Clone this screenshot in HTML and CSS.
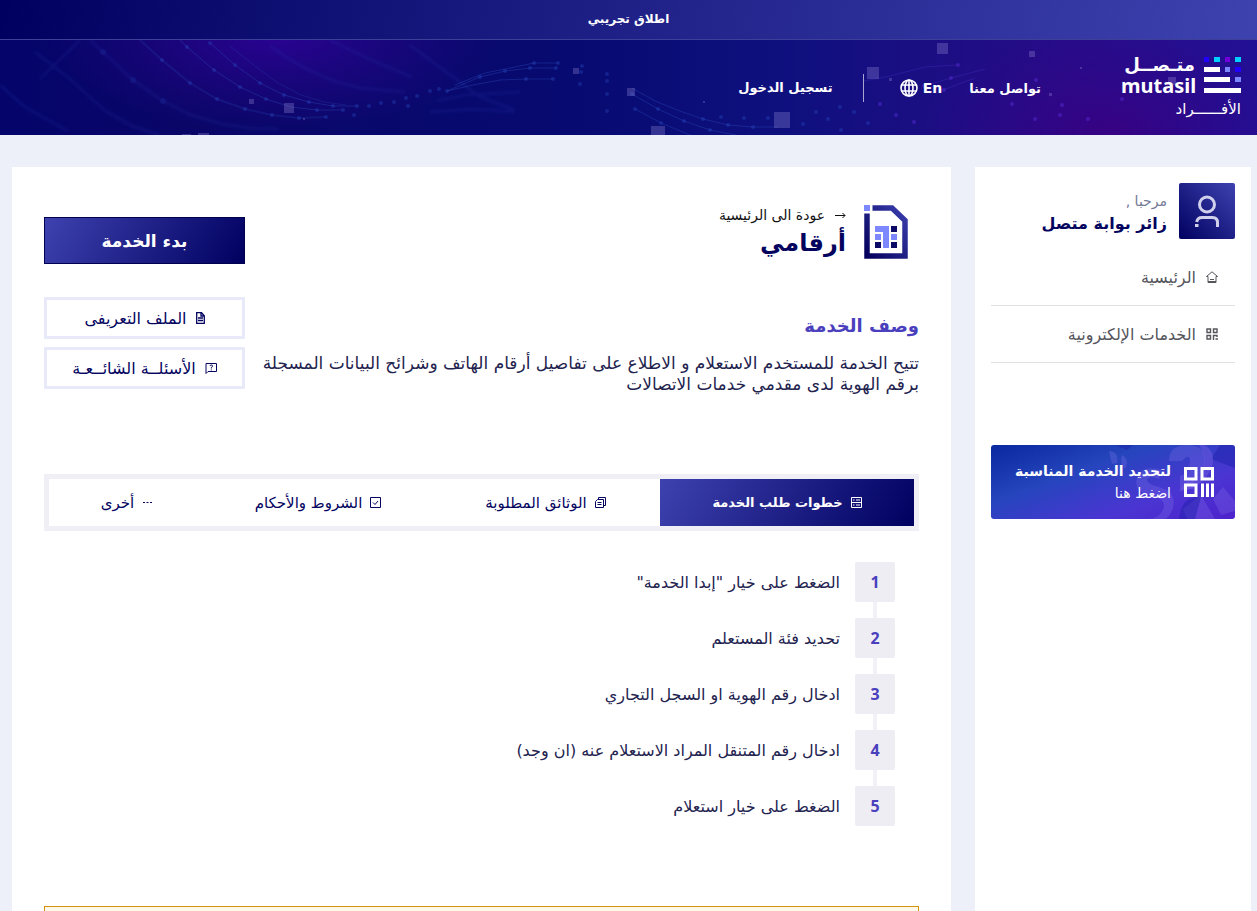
FILE: index.html
```html
<!DOCTYPE html>
<html lang="ar" dir="rtl">
<head>
<meta charset="utf-8">
<meta name="viewport" content="width=device-width, initial-scale=1">
<title>متصل - أرقامي</title>
<link rel="stylesheet" href="styles.css">
</head>
<body>
<div class="trial">اطلاق تجريبي</div>
<header class="header">
  <svg class="header-art" viewBox="0 0 1257 95" preserveAspectRatio="none" aria-hidden="true">
    <defs>
      <linearGradient id="hBase" x1="0" y1="0" x2="1" y2="0">
        <stop offset="0" stop-color="#04046a"/><stop offset=".15" stop-color="#0a0668"/><stop offset=".45" stop-color="#070a70"/><stop offset=".62" stop-color="#0e107e"/><stop offset=".85" stop-color="#270c88"/><stop offset="1" stop-color="#221094"/>
      </linearGradient>
      <radialGradient id="hGlow"><stop offset="0" stop-color="#30029a" stop-opacity=".85"/><stop offset="1" stop-color="#2a0588" stop-opacity="0"/></radialGradient>
      <radialGradient id="hGlow2"><stop offset="0" stop-color="#3a0082" stop-opacity=".85"/><stop offset="1" stop-color="#300588" stop-opacity="0"/></radialGradient>
      <filter id="soft"><feGaussianBlur stdDeviation="1.5"/></filter>
    </defs>
    <rect width="1257" height="95" fill="url(#hBase)"/>
    <ellipse cx="275" cy="-5" rx="230" ry="95" fill="url(#hGlow)"/>
    <ellipse cx="1110" cy="95" rx="190" ry="110" fill="url(#hGlow2)"/>
    <g fill="none" stroke="#2c4fc0" stroke-opacity=".36">
      <path d="M180 0 187 7 214 30 240 47 266 59 291 67 317 70 343 70"/>
      <path d="M210 3 235 25 260 43 284 55 309 62 333 66 357 66"/>
      <path d="M140 0 162 20 190 43 217 59 245 69 272 75 299 78 326 77" stroke-width="2" stroke-opacity=".2"/>
      <path d="M230 6 255 26 278 43 301 55 324 62 346 65" stroke-opacity=".25"/>
      <path d="M447 51 480 37 505 31 530 28 556 28M455 45 485 33 510 28 534 23 558 23M447 51 473 45 500 40 526 39 553 39"/>
      <path d="M632 54 658 69 684 81 710 90 736 95M632 48 655 61 680 71 703 79 728 85 753 87 778 87M635 69 661 83 690 95"/>
      <path d="M864 41 890 36 925 27 957 25M924 46 951 38 985 29M943 50 975 38" stroke="#4930c0"/>
    </g>
    <g fill="none" stroke="#2846bb" stroke-opacity=".16" stroke-width="3" filter="url(#soft)">
      <path d="M90 0 103 12 133 40 163 61 191 75 222 84 250 88 278 89M80 0 40 39M35 12 70 39 104 70 132 86 160 95M270 6 294 22 317 34 337 42 360 48 405 52M330 0 371 20 412 37M0 45 25 67 68 91M410 5 480 57 515 70M437 61 465 55 520 52M430 72 475 69 515 72"/>
    </g>
    <g fill="#2d59cf" fill-opacity=".3">
      <circle cx="187" cy="7" r="2"/><circle cx="214" cy="30" r="2"/><circle cx="240" cy="47" r="2"/><circle cx="266" cy="59" r="2"/><circle cx="317" cy="70" r="2"/><circle cx="343" cy="70" r="2"/><circle cx="210" cy="3" r="2"/><circle cx="235" cy="25" r="2"/><circle cx="260" cy="43" r="2"/><circle cx="284" cy="55" r="2"/><circle cx="309" cy="62" r="2"/><circle cx="333" cy="66" r="2"/><circle cx="357" cy="66" r="2"/><circle cx="162" cy="20" r="2"/><circle cx="190" cy="43" r="2"/><circle cx="217" cy="59" r="2"/><circle cx="245" cy="69" r="2"/><circle cx="272" cy="75" r="2"/><circle cx="299" cy="78" r="2"/><circle cx="326" cy="77" r="2"/>
      <circle cx="369" cy="66" r="2"/><circle cx="381" cy="63" r="2"/><circle cx="394" cy="62" r="2"/><circle cx="406" cy="58" r="2"/><circle cx="417" cy="56" r="2"/><circle cx="430" cy="51" r="2"/><circle cx="439" cy="49" r="2"/><circle cx="354" cy="75" r="2"/><circle cx="408" cy="66" r="2"/><circle cx="447" cy="51" r="2"/><circle cx="480" cy="37" r="2"/><circle cx="505" cy="31" r="2"/><circle cx="530" cy="28" r="2"/><circle cx="556" cy="28" r="2"/><circle cx="534" cy="23" r="2"/><circle cx="558" cy="23" r="2"/><circle cx="526" cy="39" r="2"/><circle cx="553" cy="39" r="2"/><circle cx="582" cy="26" r="2"/><circle cx="581" cy="32" r="2"/><circle cx="580" cy="44" r="2"/><circle cx="607" cy="34" r="2"/><circle cx="607" cy="41" r="2"/><circle cx="607" cy="54" r="2"/><circle cx="607" cy="71" r="2"/>
      <circle cx="632" cy="54" r="2"/><circle cx="658" cy="69" r="2"/><circle cx="684" cy="81" r="2"/><circle cx="710" cy="90" r="2"/><circle cx="635" cy="69" r="2"/><circle cx="661" cy="83" r="2"/><circle cx="703" cy="79" r="2"/><circle cx="728" cy="85" r="2"/><circle cx="753" cy="87" r="2"/><circle cx="721" cy="77" r="2"/><circle cx="744" cy="78" r="2"/><circle cx="768" cy="78" r="2"/><circle cx="803" cy="84" r="2"/><circle cx="816" cy="72" r="2"/><circle cx="841" cy="90" r="2"/><circle cx="828" cy="79" r="2"/><circle cx="840" cy="67" r="2"/><circle cx="854" cy="72" r="2"/><circle cx="868" cy="83" r="2"/>
    </g>
    <g fill="#2d59cf" fill-opacity=".15"><circle cx="133" cy="40" r="3"/><circle cx="163" cy="61" r="3"/><circle cx="103" cy="12" r="3"/></g>
    <g fill="#5a2fdc" fill-opacity=".45">
      <circle cx="880" cy="64" r="2"/><circle cx="896" cy="75" r="2"/><circle cx="914" cy="82" r="2"/><circle cx="924" cy="46" r="2"/><circle cx="951" cy="38" r="2"/><circle cx="958" cy="25" r="2"/><circle cx="944" cy="50" r="2"/><circle cx="1012" cy="64" r="2"/><circle cx="1036" cy="40" r="2"/><circle cx="1062" cy="65" r="2"/><circle cx="1060" cy="75" r="2"/><circle cx="1035" cy="79" r="2"/><circle cx="1088" cy="79" r="2"/><circle cx="1122" cy="59" r="2"/>
    </g>
    <g fill="#9d91dc" fill-opacity=".3">
      <path d="M249 59h5v5h-5zM284 63h10v10h-10zM182 94h9v1h-9zM198 93h11v2h-11zM573 28h6v6h-6zM627 48h8v8h-8zM651 86h14v9h-14zM774 72h16v16h-16zM867 27h12v12h-12zM937 3h11v11h-11zM1029 11h6v6h-6zM889 38h3v3h-3zM1168 37h8v8h-8zM1049 53h3v3h-3zM703 61h2v2h-2zM303 78h2v2h-2zM1080 27h2v2h-2z"/>
    </g>
  </svg>
  <a class="logo" href="#">
    <svg class="logo-mark" viewBox="0 0 37 36" aria-hidden="true">
      <path fill="#2200ff" d="M0 0h5v5H0zM31 10h6v5h-6z"/><path fill="#00d0ff" d="M10 0h6v5h-6zM31 0h6v5h-6z"/><path fill="#7300dc" d="M21 0h5v5h-5z"/><path fill="#7d88ff" d="M21 10h5v5h-5zM31 20h6v5h-6z"/><path fill="#fff" d="M0 10h16v5H0zM0 20h26v5H0zM0 31h37v5H0z"/>
    </svg>
    <span class="logo-words"><span class="logo-ar">متـصــل</span><span class="logo-en" lang="en">mutasil</span></span>
    <span class="logo-sub">الأفــــــراد</span>
  </a>
  <nav class="nav">
    <a href="#">تواصل معنا</a>
    <a class="lang" href="#" lang="en"><span>En</span>
      <svg viewBox="0 0 18 18" fill="none" stroke="#fff" stroke-width="1.6" aria-hidden="true"><circle cx="9" cy="9" r="8"/><ellipse cx="9" cy="9" rx="4" ry="8"/><path d="M9 1v16M1.500 6h15M1.500 12h15"/></svg>
    </a>
    <a class="login" href="#">تسجيل الدخول</a>
  </nav>
</header>

<div class="page">
  <aside class="sidebar">
    <div class="profile">
      <span class="avatar"><svg viewBox="0 0 56 56" fill="none" stroke="#d0d0ec" stroke-width="3" aria-hidden="true"><circle cx="28" cy="21.500" r="7.500"/><path d="M38.500 44v-4.500q0-5-5-5H23q-4.500 0-5.300 4.500"/><path d="M16 42.500h3.500"/></svg></span>
      <div><p class="hello">مرحبا ,</p><p class="user">زائر بوابة متصل</p></div>
    </div>
    <nav class="side-nav">
      <a href="#"><svg viewBox="0 0 12 12" fill="none" stroke="currentColor" aria-hidden="true"><path d="M.5 5.500 6 .8l5.500 4.700H10v6H2v-6zM4 8.500h4M2 10.500h8"/></svg>الرئيسية</a>
      <a href="#"><svg viewBox="0 0 12 12" fill="none" stroke="currentColor" stroke-width="1.400" aria-hidden="true"><path d="M1 1h3.500v3.500H1zM7.500 1H11v3.500H7.500zM1 7.500h3.500V11H1zM7.500 12V7.500H11V9M9.500 11H12"/></svg>الخدمات الإلكترونية</a>
    </nav>
    <a class="promo" href="#">
      <svg class="promo-art" viewBox="0 0 244 74" preserveAspectRatio="xMaxYMid slice" aria-hidden="true">
        <g fill="#8b7cf0" fill-opacity=".25"><path d="M178 16q0-16 18-16t18 14-11 20v10h-14V31q10-4 10-14t-8-1zM148 74q22 2 25-12 1-9-15-12-16-4-12-17 5-14 24-8l-2 9q-10-4-12 1 0 4 12 7 18 5 14 21-3 9-8 11zM222 54l10-12 12 14v10l-14 4zM192 64l18-14 14 24h-28z"/><path d="M118 6q10 0 8 12l-5 1q-2-7-3-13zM131 10q8 4 3 14-6-5-3-14z"/></g>
        <g fill="#1b1fa8" fill-opacity=".45"><path d="M220 14 229 0h15v23zM124 0h18l-6 5zM190 64q6-14 20-12l-6 22h-16z"/></g>
        <path d="M214 0q14 10 4 28-12 18-30 18l6-8q14-2 18-14 4-14-4-24z" fill="#7560e2" fill-opacity=".45"/>
      </svg>
      <svg class="promo-icon" viewBox="0 0 30 30" fill="none" stroke="#fff" stroke-width="3" aria-hidden="true"><path d="M1.500 1.500h10.500v10.500H1.500zM18 1.500h10.500v10.500H18zM1.500 18h10.500v10.500H1.500zM18.500 16.500V30M23.500 16.500V30M28.500 16.500V30"/></svg>
      <span class="promo-text"><strong>لتحديد الخدمة المناسبة</strong><span>اضغط هنا</span></span>
    </a>
  </aside>

  <main class="card">
    <div class="intro">
      <div class="about">
        <div class="title-row">
          <svg class="service-icon" viewBox="0 0 44 54" aria-hidden="true">
            <defs><linearGradient id="doc" x1="0" y1="1" x2="1" y2="0"><stop offset="0" stop-color="#04005c"/><stop offset="1" stop-color="#3b3fae"/></linearGradient></defs>
            <path fill="none" stroke="url(#doc)" stroke-width="5.500" d="M8.500 3H28L41 15.500V51H3V8.500"/>
            <path fill="#7d88ff" d="M0 0h6v6H0zM11 21h14v22h-6V27h-8zM11 29h6v6h-6zM27 29h6v6h-6z"/><path fill="#0b0866" d="M11 37h6v6h-6zM27 21h6v6h-6zM27 37h6v6h-6z"/>
          </svg>
          <div>
            <a class="back" href="#"><svg viewBox="0 0 11 8" fill="none" stroke="currentColor" aria-hidden="true"><path d="M0 4.500h10M7.500 2 10 4.500 7.500 7"/></svg>عودة الى الرئيسية</a>
            <h1>أرقامي</h1>
          </div>
        </div>
        <h2>وصف الخدمة</h2>
        <p class="desc">تتيح الخدمة للمستخدم الاستعلام و الاطلاع على تفاصيل أرقام الهاتف وشرائح البيانات المسجلة برقم الهوية لدى مقدمي خدمات الاتصالات</p>
      </div>
      <div class="actions">
        <button class="start" type="button">بدء الخدمة</button>
        <a class="outline" href="#"><svg class="file-icon" viewBox="0 0 9 12" fill="none" stroke="currentColor" stroke-width="1.300" aria-hidden="true"><path d="M.7.7h4.800l2.800 3v7.600H.7zM5 1v3h3M2 6h5M2 8.500h5"/></svg>الملف التعريفى</a>
        <a class="outline" href="#"><svg viewBox="0 0 12 12" fill="none" stroke="currentColor" aria-hidden="true"><path d="M1 11.500V1.500h10.500v8H3zM5 4q0-1 1.300-1T7.500 4.200Q7.500 5 6.300 5.500v1M6.300 7.500v1"/></svg>الأسئلــة الشائــعـة</a>
      </div>
    </div>

    <div class="tabs" role="tablist">
      <button class="tab active" type="button" role="tab" aria-selected="true"><svg viewBox="0 0 11 11" fill="none" stroke="currentColor" aria-hidden="true"><path d="M.5.500h10v10H.5zM.5 5.500h10M2 3h1.500M5 3h4M2 8h1.500M5 8h4"/></svg>خطوات طلب الخدمة</button>
      <button class="tab" type="button" role="tab" aria-selected="false"><svg viewBox="0 0 11 11" fill="none" stroke="currentColor" aria-hidden="true"><path d="M3.500 2.500v-2h7v8h-2M.5 4.500l2-2h6v8h-8zM2.500 5.500h4M2.500 7.500h4"/></svg>الوثائق المطلوبة</button>
      <button class="tab" type="button" role="tab" aria-selected="false"><svg viewBox="0 0 11 11" fill="none" stroke="currentColor" aria-hidden="true"><path d="M.5.500h10v10H.5zM3 5.500l2 2L8 4"/></svg>الشروط والأحكام</button>
      <button class="tab" type="button" role="tab" aria-selected="false"><svg viewBox="0 0 11 11" fill="currentColor" aria-hidden="true"><path d="M1 5h2v1H1zM4.500 5h2v1h-2zM8 5h2v1H8z"/></svg>أخرى</button>
    </div>

    <ol class="steps">
      <li><span class="num">1</span>الضغط على خيار "إبدا الخدمة"</li>
      <li><span class="num">2</span>تحديد فئة المستعلم</li>
      <li><span class="num">3</span>ادخال رقم الهوية او السجل التجاري</li>
      <li><span class="num">4</span>ادخال رقم المتنقل المراد الاستعلام عنه (ان وجد)</li>
      <li><span class="num">5</span>الضغط على خيار استعلام</li>
    </ol>
    <div class="notice"></div>
  </main>
</div>
</body>
</html>
```
FILE: styles.css
```css
* { box-sizing: border-box; }
body {
  margin: 0;
  min-height: 100vh;
  display: flex;
  flex-direction: column;
  background: #edf0f9;
  color: #23234f;
  font-family: "DejaVu Sans", "Noto Sans", sans-serif;
  font-size: 16px;
}
a { color: inherit; text-decoration: none; }
p, h1, h2 { margin: 0; }
svg { display: block; flex: none; }
button { font: inherit; cursor: pointer; }

.trial {
  height: 40px;
  line-height: 38px;
  text-align: center;
  color: #fff;
  font-size: 12px;
  font-weight: bold;
  background: linear-gradient(100deg, #000060, #3e42af);
  border-bottom: 1px solid #3d3f99;
}
.header {
  position: relative;
  display: flex;
  align-items: flex-start;
  gap: 80px;
  height: 95px;
  padding: 16px 16px 0;
  color: #fff;
}
.header-art { position: absolute; inset: 0; width: 100%; height: 100%; }
.logo {
  position: relative;
  display: grid;
  grid-template-columns: 37px 74px;
  column-gap: 9px;
}
.logo-mark { width: 37px; height: 36px; margin-top: 1px; }
.logo-words { display: flex; flex-direction: column; white-space: nowrap; }
.logo-ar { font-size: 18px; line-height: 17px; font-weight: bold; }
.logo-en {
  font-family: "Noto Sans", sans-serif;
  font-size: 20px;
  line-height: 26px;
  font-weight: bold;
  direction: ltr;
}
.logo-sub { grid-column: 1 / -1; font-size: 15px; line-height: 20px; }
.nav {
  position: relative;
  display: flex;
  align-items: center;
  height: 64px;
  gap: 27px;
  font-size: 13px;
  font-weight: bold;
  white-space: nowrap;
}
.lang { display: flex; align-items: center; gap: 5px; font-size: 14px; }
.lang svg { width: 18px; height: 18px; }
.login {
  margin-right: 9px;
  padding-right: 30px;
  line-height: 28px;
  border-right: 1px solid #a9a5cf;
}

.page {
  flex: 1;
  display: flex;
  gap: 24px;
  padding: 32px 6px 0 12px;
}
.sidebar { flex: 0 0 276px; padding: 16px; background: #fff; }
.profile { display: flex; gap: 12px; white-space: nowrap; }
.avatar {
  width: 56px;
  height: 56px;
  border-radius: 2px;
  background: linear-gradient(45deg, #000060, #3e42af);
}
.hello { padding-top: 8px; font-size: 14px; line-height: 20px; color: #747a96; }
.user { font-size: 16px; line-height: 26px; font-weight: bold; color: #04045f; }
.side-nav { padding-top: 10px; }
.side-nav a {
  display: flex;
  align-items: center;
  gap: 10px;
  height: 57px;
  padding-right: 17px;
  border-bottom: 1px solid #e2e2e6;
  color: #55555c;
}
.side-nav svg { width: 12px; height: 12px; }
.promo {
  position: relative;
  display: flex;
  align-items: center;
  gap: 13px;
  height: 74px;
  margin-top: 82px;
  padding: 0 21px;
  overflow: hidden;
  border-radius: 3px;
  color: #fff;
  background: linear-gradient(160deg, #0a28a0 0%, #2545bd 35%, #4a35d2 70%, #4d22cc 100%);
}
.promo-art { position: absolute; inset: 0; width: 100%; height: 100%; }
.promo-icon { position: relative; width: 30px; height: 30px; }
.promo-text { position: relative; display: grid; font-size: 14px; line-height: 22px; white-space: nowrap; }

.card {
  flex: 1;
  min-width: 0;
  display: flex;
  flex-direction: column;
  padding: 32px 32px 0;
  background: #fff;
}
.intro { display: flex; justify-content: space-between; gap: 12px; min-height: 275px; }
.about { flex: 1; min-width: 0; }
.title-row { display: flex; gap: 18px; padding: 6px 11px 0 0; }
.service-icon { width: 44px; height: 54px; }
.back { display: flex; align-items: center; gap: 10px; color: #111; font-size: 14px; line-height: 20px; }
.back svg { width: 11px; height: 8px; }
h1 { font-size: 24px; line-height: 36px; color: #04045f; }
h2 { margin-top: 51px; font-size: 18px; line-height: 28px; color: #4a3fbd; }
.desc { margin-top: 13px; font-size: 17px; line-height: 21px; }
.actions { flex: 0 0 201px; display: flex; flex-direction: column; padding-top: 18px; }
.start {
  height: 47px;
  margin: 0 0 33px;
  border: 1px solid #000050;
  color: #fff;
  font-size: 17px;
  font-weight: bold;
  background: linear-gradient(120deg, #3e42af, #000060);
}
.outline {
  display: flex;
  align-items: center;
  justify-content: center;
  gap: 9px;
  height: 42px;
  margin-bottom: 8px;
  border: 3px solid #e8eafa;
  color: #04045f;
}
.outline svg { width: 12px; height: 12px; }
.outline .file-icon { width: 9px; }

.tabs {
  display: grid;
  grid-template-columns: 254fr 229fr 226fr 156fr;
  border: 5px solid #f0eff6;
}
.tab {
  display: flex;
  align-items: center;
  justify-content: center;
  gap: 8px;
  height: 47px;
  padding: 0;
  border: 0;
  background: none;
  color: #04045f;
  font-size: 15px;
  white-space: nowrap;
}
.tab svg { width: 11px; height: 11px; }
.tab.active { color: #fff; font-size: 13px; font-weight: bold; background: linear-gradient(120deg, #3e42af, #000060); }

.steps {
  display: flex;
  flex-direction: column;
  gap: 16px;
  margin: 31px 24px 80px 0;
  padding: 0;
  list-style: none;
}
.steps li { position: relative; display: flex; align-items: center; gap: 15px; height: 40px; }
.num {
  width: 40px;
  line-height: 40px;
  border-radius: 2px;
  text-align: center;
  font-family: "Noto Sans", sans-serif;
  font-size: 16px;
  font-weight: bold;
  color: #4a3fbd;
  background: #eeedf4;
}
.steps li + li::before {
  content: "";
  position: absolute;
  right: 18px;
  bottom: 100%;
  width: 4px;
  height: 16px;
  background: #f2f1f7;
}
.notice { flex: 1; min-height: 5px; border: 1px solid #d6930f; border-bottom: 0; background: #fff9e9; }
```
